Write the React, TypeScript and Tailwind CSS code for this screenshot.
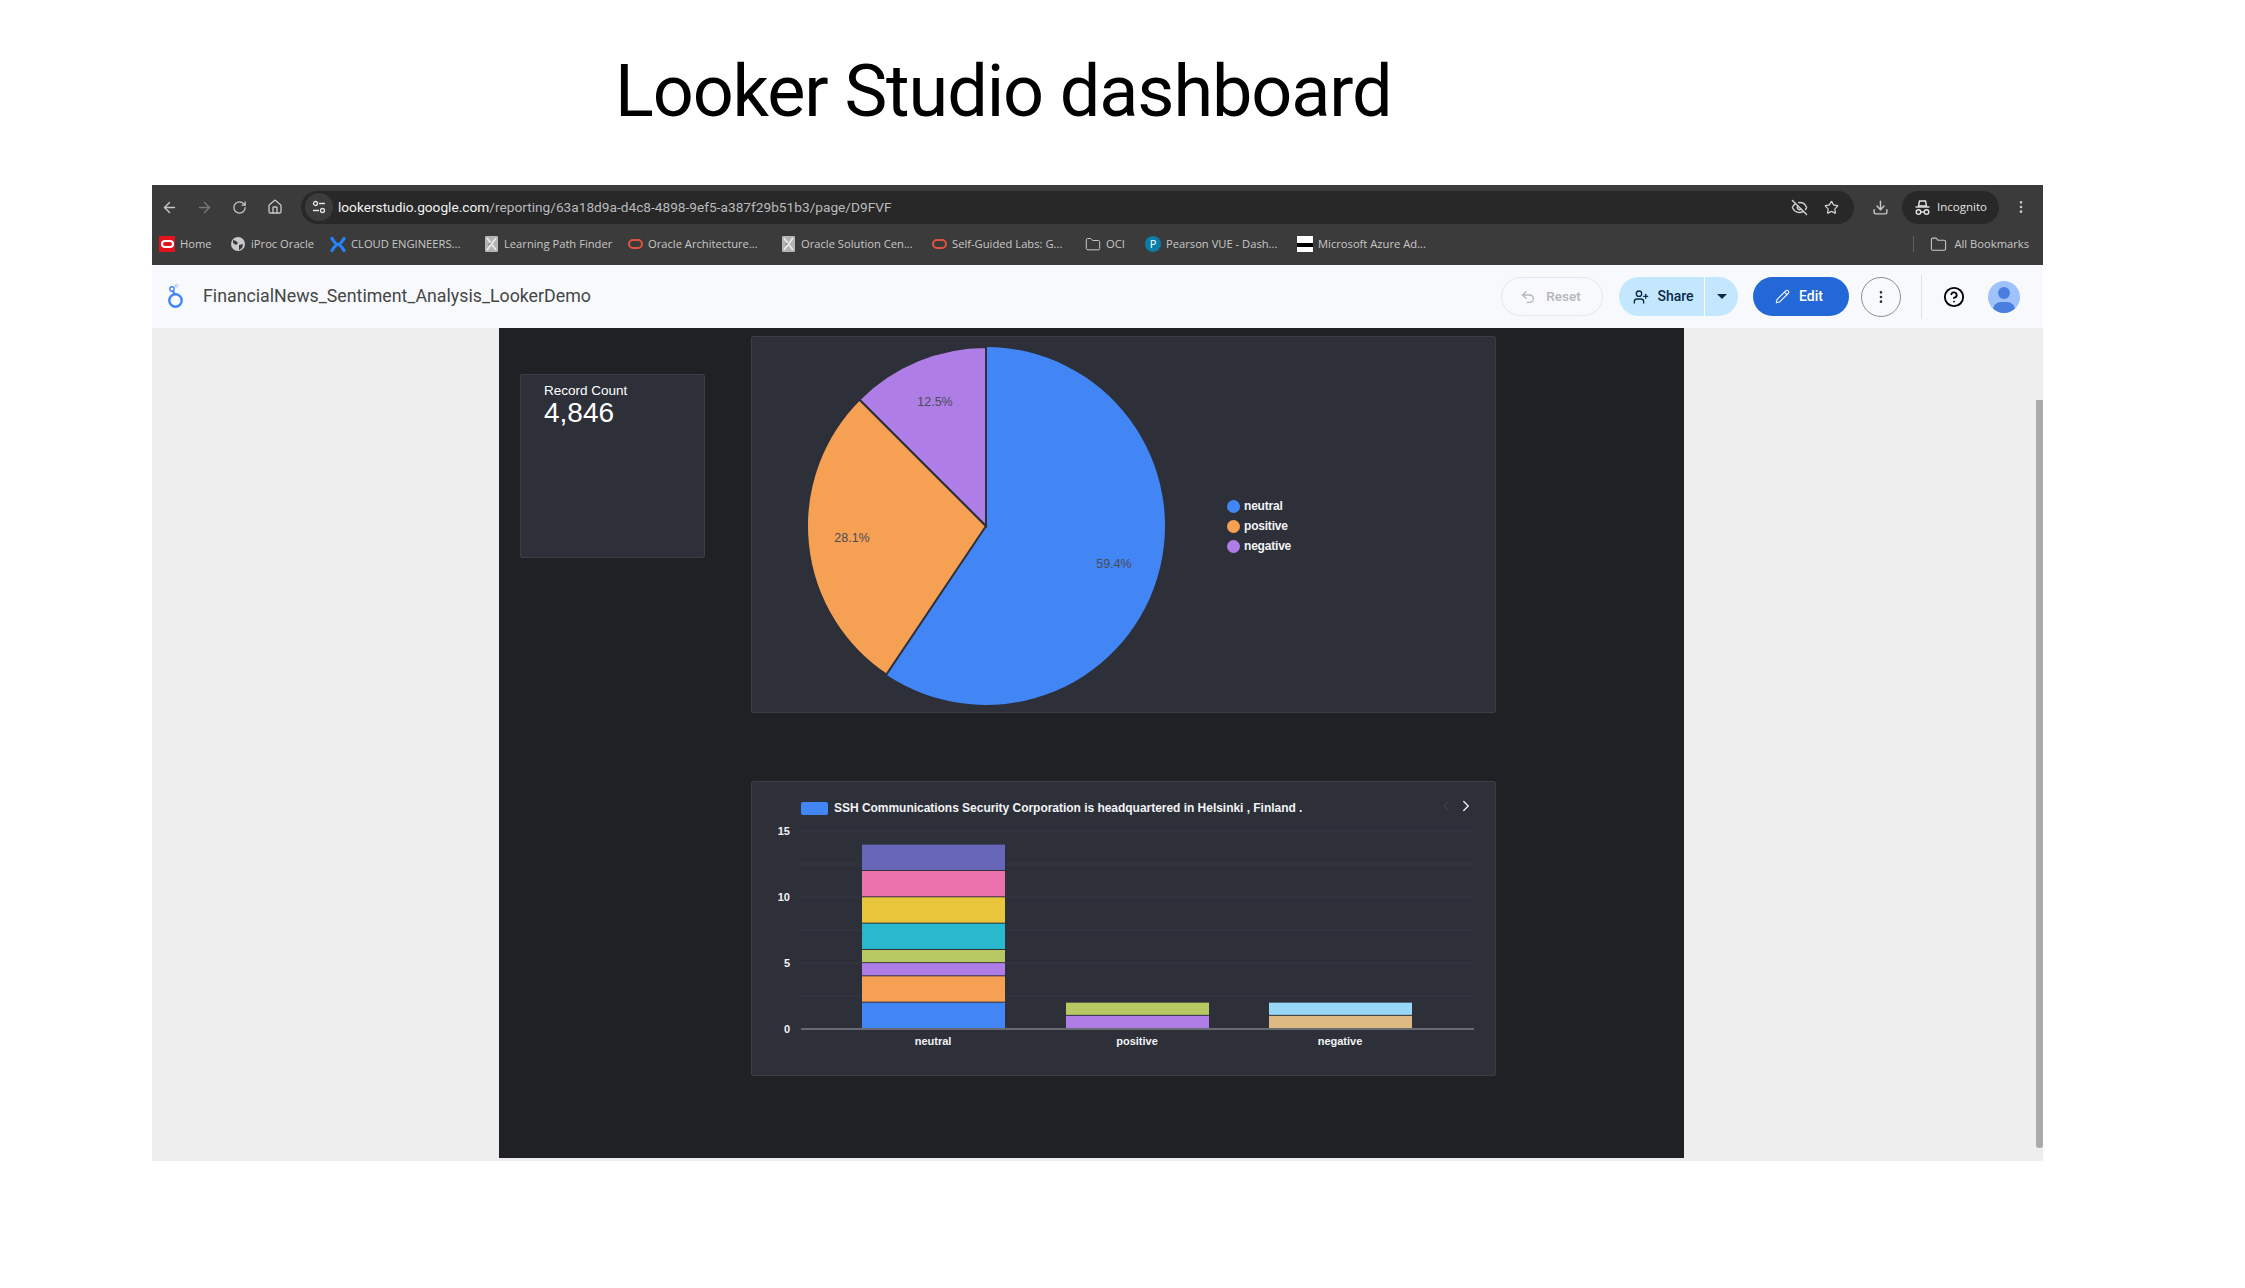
import { ArrowLeft, ArrowRight, RotateCw, Home, EyeOff, Star, Download, MoreVertical, Folder, Undo2, UserPlus, Pencil, CircleHelp, ChevronRight, ChevronLeft } from "lucide-react";

const OracleRed = () => (
  <span className="flex h-[16px] w-[16px] items-center justify-center bg-[#e3131d]">
    <span className="h-[8px] w-[13px] rounded-[4px] border-2 border-white" />
  </span>
);
const OracleOutline = () => <span className="h-[10px] w-[15px] rounded-[5px] border-2 border-[#e2533d]" />;
const Globe = () => (
  <svg width="16" height="16" viewBox="0 0 16 16">
    <circle cx="8" cy="8" r="7" fill="#c9c9c9" />
    <path d="M3 4l3 1 2 2-2 2-3-2zM9 9l4-1-1 4-3 2z" fill="#3b3b3b" />
  </svg>
);
const Confluence = () => (
  <svg width="16" height="17" viewBox="0 0 16 17" fill="none" stroke="#2684ff" strokeWidth="3.2" strokeLinecap="round">
    <path d="M14 2.5C11 7.5 9 8.5 8 8.5C7 8.5 5 7.5 2 2.5" />
    <path d="M2 14.5C5 9.5 7 8.5 8 8.5C9 8.5 11 9.5 14 14.5" />
  </svg>
);
const Tile = () => (
  <svg width="13" height="16" viewBox="0 0 13 16">
    <rect width="13" height="16" rx="1" fill="#b4b4b4" />
    <path d="M2 2l9 12M11 2L2 14" stroke="#e8e8e8" strokeWidth="1.8" />
    <path d="M3 9l3-2" stroke="#777" strokeWidth="1" />
  </svg>
);
const Pearson = () => (
  <span className="flex h-[16px] w-[16px] items-center justify-center rounded-full bg-[#0b7ea8] text-[11px] leading-none text-white">P</span>
);
const Azure = () => (
  <span className="flex h-[16px] w-[16px] flex-col bg-white">
    <span className="mt-[7px] h-[4px] w-full bg-black" />
  </span>
);
const FolderIcon = () => <Folder size={17} strokeWidth={1.5} className="text-[#c7c7c7]" />;

const bookmarks = [
  { w: "w-[71px]", icon: <OracleRed />, label: "Home" },
  { w: "w-[100px]", icon: <Globe />, label: "iProc Oracle" },
  { w: "w-[153px]", icon: <Confluence />, label: "CLOUD ENGINEERS..." },
  { w: "w-[144px]", icon: <Tile />, label: "Learning Path Finder" },
  { w: "w-[153px]", icon: <OracleOutline />, label: "Oracle Architecture..." },
  { w: "w-[151px]", icon: <Tile />, label: "Oracle Solution Cen..." },
  { w: "w-[154px]", icon: <OracleOutline />, label: "Self-Guided Labs: G..." },
  { w: "w-[60px]", icon: <FolderIcon />, label: "OCI" },
  { w: "w-[152px]", icon: <Pearson />, label: "Pearson VUE - Dash..." },
  { w: "w-[160px]", icon: <Azure />, label: "Microsoft Azure Ad..." },
];

const Incognito = () => (
  <svg width="17" height="17" viewBox="0 0 17 17" fill="none" stroke="#e3e3e3" strokeWidth="1.4">
    <path d="M5.5 2h6l1 5h-8z" />
    <path d="M1.5 8h14" />
    <circle cx="4.5" cy="13" r="2.3" />
    <circle cx="12.5" cy="13" r="2.3" />
    <path d="M6.8 13h3.4" />
  </svg>
);

const Tune = () => (
  <svg width="14" height="14" viewBox="0 0 14 14" fill="none" stroke="#e3e3e3" strokeWidth="1.3">
    <circle cx="3.5" cy="3.5" r="2" />
    <path d="M7 3.5h6M1 10.5h6" />
    <circle cx="10.5" cy="10.5" r="2" />
  </svg>
);

const LookerLogo = () => (
  <svg width="17" height="25" viewBox="0 0 17 25" fill="none">
    <circle cx="8.5" cy="16.5" r="6.2" stroke="#4285f4" strokeWidth="2.4" />
    <path d="M5.5 6.5 L8 10.5" stroke="#4285f4" strokeWidth="2" />
    <circle cx="5" cy="5" r="2.2" stroke="#4285f4" strokeWidth="1.4" />
    <circle cx="9.5" cy="1.8" r="1.3" stroke="#9fb8e8" strokeWidth="1" />
  </svg>
);

const polar = (a: number, r = 179) => {
  const t = (a * Math.PI) / 180;
  return [179 + r * Math.sin(t), 179 - r * Math.cos(t)];
};
const slice = (a: number, b: number) => {
  const [x1, y1] = polar(a);
  const [x2, y2] = polar(b);
  return `M179 179 L${x1} ${y1} A179 179 0 ${b - a > 180 ? 1 : 0} 1 ${x2} ${y2} Z`;
};

const Pie = () => (
  <svg width="358" height="358" viewBox="0 0 358 358" className="shrink-0">
    <path d={slice(0, 213.84)} fill="#4285f4" />
    <path d={slice(213.84, 315)} fill="#f6a054" stroke="#2d2f39" strokeWidth="2" />
    <path d={slice(315, 360)} fill="#ae7ee6" stroke="#2d2f39" strokeWidth="2" />
    <g fontFamily="Liberation Sans, sans-serif" fontSize="12.5" fill="#4a4c56" textAnchor="middle">
      <text x="307" y="221">59.4%</text>
      <text x="45" y="195">28.1%</text>
      <text x="128" y="59">12.5%</text>
    </g>
  </svg>
);

const legend = [
  { c: "bg-[#4285f4]", t: "neutral" },
  { c: "bg-[#f6a054]", t: "positive" },
  { c: "bg-[#ae7ee6]", t: "negative" },
];

const y0 = 1029;
const u = 13.17;
const bars: { x: number; s: [number, number, string][] }[] = [
  {
    x: 862,
    s: [
      [0, 2, "#4285f4"],
      [2, 4, "#f6a054"],
      [4, 5, "#ae7ee6"],
      [5, 6, "#b8c964"],
      [6, 8, "#2ab8cd"],
      [8, 10, "#e9c53b"],
      [10, 12, "#e972ad"],
      [12, 14, "#6766b8"],
    ],
  },
  { x: 1066, s: [[0, 1, "#ae7ee6"], [1, 2, "#b8c964"]] },
  { x: 1269, s: [[0, 1, "#ddb984"], [1, 2, "#98d8f6"]] },
];

const Chart = () => (
  <svg width="743" height="249" viewBox="752 826 743 249" className="block">
    {[831, 864, 897, 930, 963, 996].map((y) => (
      <line key={y} x1="801" x2="1474" y1={y} y2={y} stroke="#373a45" strokeWidth="1" />
    ))}
    {bars.map((b) =>
      b.s.map(([from, to, c]) => (
        <rect key={b.x + c} x={b.x} width="143" y={y0 - to * u} height={(to - from) * u - 1} fill={c} />
      ))
    )}
    <line x1="801" x2="1474" y1={y0} y2={y0} stroke="#a3a5aa" strokeWidth="1.2" />
    <g fontFamily="Liberation Sans, sans-serif" fontSize="11" fontWeight="700" fill="#f1f3f4">
      <g textAnchor="end">
        <text x="790" y="835">15</text>
        <text x="790" y="901">10</text>
        <text x="790" y="967">5</text>
        <text x="790" y="1033">0</text>
      </g>
      <g textAnchor="middle">
        <text x="933" y="1045">neutral</text>
        <text x="1137" y="1045">positive</text>
        <text x="1340" y="1045">negative</text>
      </g>
    </g>
  </svg>
);

export default function App() {
  return (
    <div className="flex h-[1288px] w-[2245px] flex-col overflow-hidden bg-white font-['Open_Sans',sans-serif]">
      <div className="flex h-[185px] shrink-0 items-start pl-[615px] pt-[50px]">
        <h1 className="font-['Roboto',sans-serif] text-[72px] font-normal leading-[84px] tracking-[-1.1px] text-black">Looker Studio dashboard</h1>
      </div>

      <div className="ml-[152px] flex w-[1891px] flex-col">
        {/* browser chrome */}
        <div className="flex h-[44px] items-center bg-[#3b3b3b] text-[#c7c7c7]">
          <span className="flex w-[35px] justify-center"><ArrowLeft size={17} /></span>
          <span className="flex w-[35px] justify-center text-[#777]"><ArrowRight size={17} /></span>
          <span className="flex w-[35px] justify-center"><RotateCw size={15} /></span>
          <span className="flex w-[35px] justify-center pl-[2px]"><Home size={16} /></span>
          <div className="ml-[9px] flex h-[33px] w-[1554px] items-center rounded-full bg-[#282828]">
            <span className="ml-[4px] flex h-[28px] w-[28px] items-center justify-center rounded-full bg-[#3c3c3c]"><Tune /></span>
            <span className="ml-[5px] font-['Roboto',sans-serif] text-[13.7px] text-[#b9bbbe]">
              <span className="text-[#f1f3f4]">lookerstudio.google.com</span>/reporting/63a18d9a-d4c8-4898-9ef5-a387f29b51b3/page/D9FVF
            </span>
            <span className="ml-auto flex items-center gap-[16px] pr-[15px] text-[#d0d0d0]">
              <EyeOff size={17} />
              <Star size={15} />
            </span>
          </div>
          <span className="flex w-[48px] justify-center pl-[4px]"><Download size={17} /></span>
          <div className="flex h-[33px] w-[97px] items-center rounded-full bg-[#282828] pl-[12px] text-[11.5px] text-[#e3e3e3]">
            <Incognito />
            <span className="ml-[6px]">Incognito</span>
          </div>
          <span className="flex w-[44px] justify-center"><MoreVertical size={16} /></span>
        </div>
        <div className="flex h-[36px] items-center bg-[#3b3b3b] pb-[6px] pl-[7px] text-[11.2px] text-[#c7c7c7]">
          {bookmarks.map((b) => (
            <div key={b.label} className={`flex shrink-0 items-center gap-[5px] whitespace-nowrap ${b.w}`}>
              <span className="flex w-[16px] shrink-0 items-center justify-center">{b.icon}</span>
              <span>{b.label}</span>
            </div>
          ))}
          <div className="ml-auto flex items-center pr-[14px]">
            <span className="mr-[16px] h-[16px] w-px bg-[#5f5f5f]" />
            <FolderIcon />
            <span className="ml-[7px] whitespace-nowrap">All Bookmarks</span>
          </div>
        </div>

        {/* looker header */}
        <div className="flex h-[63px] items-center bg-[#f8f9fd] pl-[15px] pr-[23px] font-['Roboto',sans-serif]">
          <LookerLogo />
          <span className="ml-[19px] text-[17.8px] text-[#444746]">FinancialNews_Sentiment_Analysis_LookerDemo</span>
          <div className="ml-auto flex items-center">
            <div className="flex h-[39px] w-[102px] items-center justify-center gap-[10px] rounded-full border border-[#e6e7ea] pr-[3px] text-[13.5px] font-medium text-[#b5b6b8]">
              <Undo2 size={16} />
              <span>Reset</span>
            </div>
            <div className="ml-[16px] flex h-[39px] w-[119px] items-center rounded-full bg-[#c2e7ff] text-[14px] font-medium text-[#0b2a4a]">
              <div className="flex h-full w-[86px] items-center justify-center gap-[8px] border-r border-white pl-[4px]">
                <UserPlus size={16} />
                <span>Share</span>
              </div>
              <span className="ml-[12px] h-0 w-0 border-x-[5px] border-t-[5px] border-x-transparent border-t-[#0b2a4a]" />
            </div>
            <div className="ml-[15px] flex h-[39px] w-[96px] items-center justify-center gap-[9px] rounded-full bg-[#2368d6] pr-[4px] text-[14px] font-medium text-white">
              <Pencil size={15} strokeWidth={1.7} />
              <span>Edit</span>
            </div>
            <div className="ml-[12px] flex h-[40px] w-[40px] items-center justify-center rounded-full border border-[#8e8e8e] text-[#333]">
              <MoreVertical size={16} />
            </div>
            <span className="ml-[20px] h-[44px] w-px bg-[#e0e1e4]" />
            <CircleHelp size={22} className="ml-[21px] text-black" />
            <div className="relative ml-[23px] h-[32px] w-[32px] overflow-hidden rounded-full bg-[#a0c2fb]">
              <span className="absolute left-[10px] top-[6px] h-[12px] w-[12px] rounded-full bg-[#4a7fe0]" />
              <span className="absolute left-[5px] top-[21px] h-[16px] w-[22px] rounded-full bg-[#4a7fe0]" />
            </div>
          </div>
        </div>

        {/* report area */}
        <div className="relative h-[833px] bg-[#eeeeee]">
          <div className="ml-[347px] flex h-[830px] w-[1185px] bg-[#202124] font-['Liberation_Sans',sans-serif]">
            <div className="ml-[21px] mt-[46px] h-[184px] w-[185px] rounded-[2px] border border-[#3a3c46] bg-[#2d2f39] pl-[23px] pt-[8px] text-white">
              <div className="text-[13.5px] leading-[16px]">Record Count</div>
              <div className="text-[28px] leading-[28px]">4,846</div>
            </div>
            <div className="ml-[46px] mt-[8px] flex w-[745px] flex-col">
              <div className="flex h-[377px] items-center rounded-[2px] border border-[#3a3c46] bg-[#2d2f39] pl-[55px] pt-[3px]">
                <Pie />
                <div className="ml-[62px] flex flex-col gap-[1.5px]">
                  {legend.map((l) => (
                    <div key={l.t} className="flex h-[18.5px] items-center gap-[4px] text-[12px] font-bold tracking-[-0.2px] text-[#f1f3f4]">
                      <span className={`h-[13px] w-[13px] rounded-full ${l.c}`} />
                      <span>{l.t}</span>
                    </div>
                  ))}
                </div>
              </div>
              <div className="mt-[68px] h-[295px] rounded-[2px] border border-[#3a3c46] bg-[#2d2f39]">
                <div className="flex h-[44px] items-center pl-[49px] pr-[20px] pt-[8px]">
                  <span className="h-[13px] w-[27px] rounded-[2px] bg-[#4285f4]" />
                  <span className="ml-[6px] whitespace-nowrap text-[12px] font-bold tracking-[-0.03px] text-[#f1f3f4]">SSH Communications Security Corporation is headquartered in Helsinki , Finland .</span>
                  <ChevronLeft size={16} className="ml-auto -mt-[4px] text-[#3a3c46]" />
                  <ChevronRight size={18} className="ml-[3px] -mt-[4px] text-[#e8e8e8]" />
                </div>
                <Chart />
              </div>
            </div>
          </div>
          <div className="absolute right-0 top-[72px] h-[748px] w-[7px] rounded-b-[3px] bg-[#aaaaaa]" />
        </div>
      </div>
    </div>
  );
}
